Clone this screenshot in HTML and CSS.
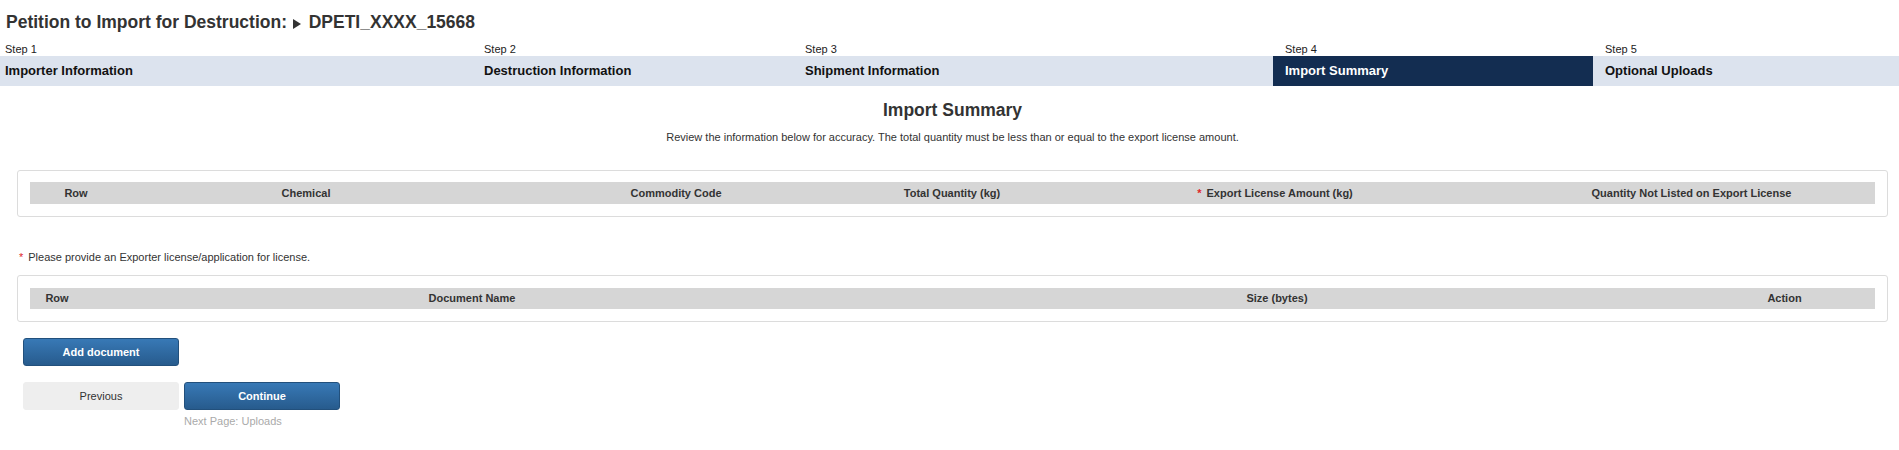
FILE: index.html
```
<!DOCTYPE html>
<html lang="en">
<head>
    <meta charset="UTF-8">
    <title>Petition to Import for Destruction</title>
    <link rel="stylesheet" href="styles.css">
</head>
<body>

    <!-- Page title -->
    <div class="page-title">
        Petition to Import for Destruction:
        <svg class="caret" width="8" height="10" viewBox="0 0 8 10"><polygon points="0,0 8,5 0,10" fill="#333"/></svg>
        DPETI_XXXX_15668
    </div>

    <!-- Wizard steps -->
    <div class="steps">
        <div class="step first">
            <div class="step-num">Step 1</div>
            <div class="step-name">Importer Information</div>
        </div>
        <div class="step">
            <div class="step-num">Step 2</div>
            <div class="step-name">Destruction Information</div>
        </div>
        <div class="step">
            <div class="step-num">Step 3</div>
            <div class="step-name">Shipment Information</div>
        </div>
        <div class="step active">
            <div class="step-num">Step 4</div>
            <div class="step-name">Import Summary</div>
        </div>
        <div class="step">
            <div class="step-num">Step 5</div>
            <div class="step-name">Optional Uploads</div>
        </div>
    </div>

    <!-- Summary content -->
    <div class="content">
        <h2>Import Summary</h2>
        <p class="intro">Review the information below for accuracy. The total quantity must be less than or equal to the export license amount.</p>

        <div class="panel">
            <div class="grid-head summary-cols">
                <div>Row</div>
                <div>Chemical</div>
                <div>Commodity Code</div>
                <div>Total Quantity (kg)</div>
                <div><span class="req">*</span>Export License Amount (kg)</div>
                <div>Quantity Not Listed on Export License</div>
            </div>
        </div>

        <p class="note"><span class="req">*</span>Please provide an Exporter license/application for license.</p>

        <div class="panel doc-panel">
            <div class="grid-head doc-cols">
                <div>Row</div>
                <div>Document Name</div>
                <div>Size (bytes)</div>
                <div>Action</div>
            </div>
        </div>

        <div class="actions">
            <button class="btn btn-primary">Add document</button>
        </div>

        <div class="nav-buttons">
            <button class="btn btn-plain">Previous</button>
            <div class="next-wrap">
                <button class="btn btn-primary">Continue</button>
                <div class="next-page">Next Page: Uploads</div>
            </div>
        </div>
    </div>

</body>
</html>
```

FILE: styles.css
```
body {
    margin: 0;
    padding: 0;
    font-family: "Liberation Sans", Arial, sans-serif;
    color: #333;
    background-color: #fff;
}
/* Title */
.page-title {
    padding: 12px 6px 0;
    font-size: 17.5px;
    font-weight: bold;
    line-height: 20px;
    color: #333;
}
.page-title .caret {
    margin: 0 3px 0 1px;
    vertical-align: -1px;
}
/* Steps */
.steps {
    display: grid;
    grid-template-columns: 472px 321px 480px 320px 1fr;
    margin-top: 11px;
}
.step-num {
    padding-left: 12px;
    font-size: 11px;
    line-height: 13px;
    color: #222;
}
.step-name {
    padding-left: 12px;
    height: 30px;
    line-height: 30px;
    font-size: 13px;
    font-weight: bold;
    color: #111;
    background-color: #dce3ee;
}
.step.first .step-num,
.step.first .step-name {
    padding-left: 5px;
}
.step.active .step-name {
    background-color: #132d51;
    color: #fff;
}
/* Content */
.content {
    margin: 0 11px 0 17px;
}
.content h2 {
    margin: 14px 0 0;
    font-size: 17.5px;
    line-height: 20px;
    text-align: center;
    color: #333;
}
.content .intro {
    margin: 10px 0 0;
    font-size: 11px;
    line-height: 14px;
    text-align: center;
}
.panel {
    margin-top: 26px;
    padding: 11px 12px 12px 12px;
    border: 1px solid #dcdcdc;
    border-radius: 3px;
}
.doc-panel {
    margin-top: 11px;
    padding: 12px 12px 12px 12px;
}
.grid-head {
    display: grid;
    height: 22px;
    line-height: 22px;
    background-color: #d6d6d6;
    font-size: 11px;
    font-weight: bold;
    color: #333;
    text-align: center;
}
.summary-cols {
    grid-template-columns: 92px 368px 372px 180px 466px 1fr;
}
.doc-cols {
    height: 21px;
    line-height: 21px;
    grid-template-columns: 54px 776px 834px 1fr;
}
.req {
    color: #e0262b;
    margin-right: 5px;
}
.note {
    margin: 33px 0 0 2px;
    font-size: 11px;
    line-height: 14px;
}
/* Buttons */
.actions {
    margin-top: 16px;
    padding-left: 6px;
}
.nav-buttons {
    display: flex;
    gap: 5px;
    margin-top: 16px;
    padding-left: 6px;
}
.btn {
    width: 156px;
    height: 28px;
    font-family: "Liberation Sans", Arial, sans-serif;
    font-size: 11px;
    border-radius: 3px;
    cursor: pointer;
}
.btn-primary {
    color: #fff;
    font-weight: bold;
    background: linear-gradient(#3879b6, #275b8d);
    border: 1px solid #22507c;
}
.btn-plain {
    color: #333;
    background-color: #eeeeee;
    border: 1px solid #eeeeee;
}
.next-page {
    margin-top: 4px;
    font-size: 11px;
    line-height: 14px;
    color: #aaa;
}
```
